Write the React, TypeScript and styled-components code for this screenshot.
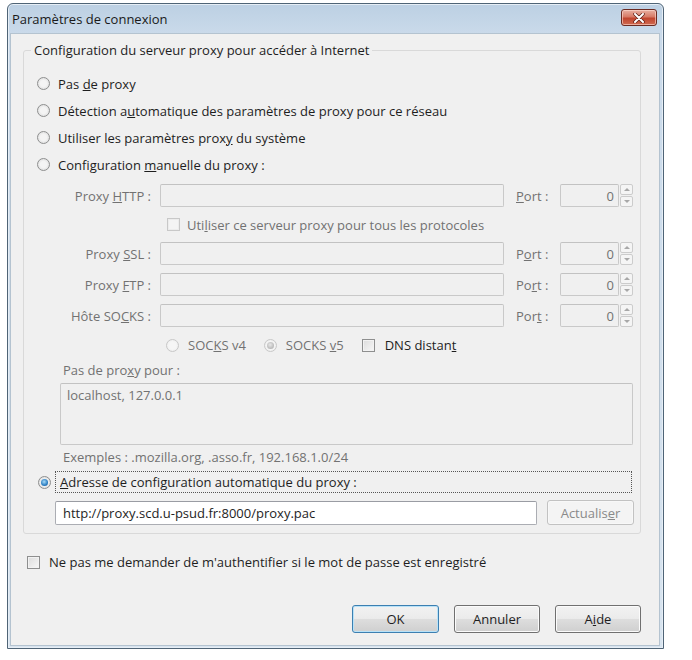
import React from 'react';
import styled, { createGlobalStyle, css } from 'styled-components';

const GlobalStyle = createGlobalStyle`
  html, body {
    margin: 0;
    padding: 0;
    background: #ffffff;
  }
  body {
    font-family: 'Open Sans', 'Noto Sans', sans-serif;
    font-size: 13px;
    color: #1e1e1e;
  }
`;

const Stage = styled.div`
  width: 692px;
  height: 660px;
  padding: 3px 0 0 7px;
  box-sizing: border-box;
`;

const Window = styled.div`
  width: 657px;
  height: 646px;
  box-sizing: border-box;
  display: flex;
  flex-direction: column;
  border: 1px solid #4f6476;
  border-radius: 6px 6px 0 0;
  background: linear-gradient(180deg, #bcd0e3 0px, #cadaea 30px, #d8e4ef 100%);
  box-shadow: inset 0 0 0 1px #e6eef6;
`;

const TitleBar = styled.div`
  height: 29px;
  flex: none;
  display: flex;
  align-items: flex-start;
  justify-content: space-between;
  padding: 0 6px 0 4px;
`;

const Title = styled.span`
  margin-top: 6px;
  font-size: 13px;
  color: #1a1a1a;
`;

const CloseButton = styled.div`
  margin-top: 5px;
  width: 36px;
  height: 17px;
  box-sizing: border-box;
  border: 1px solid #6b2b22;
  border-radius: 3px;
  background: linear-gradient(180deg, #e8b0a2 0%, #d77a66 45%, #c0452f 55%, #d06a50 100%);
  box-shadow: inset 0 0 0 1px rgba(255, 220, 210, 0.6);
  display: flex;
  align-items: center;
  justify-content: center;
`;

const Body = styled.div`
  flex: 1;
  margin: 0 3px 2px 2px;
  background: #f0f0f0;
  border: 1px solid #b4c3d0;
  padding: 7px 18px 0 12px;
  display: flex;
  flex-direction: column;
`;

const GroupBox = styled.fieldset`
  margin: 0;
  padding: 11px 0 8px 0;
  border: 1px solid #d9d9d9;
  border-radius: 3px;
  min-width: 0;
`;

const Legend = styled.legend`
  margin-left: 7px;
  padding: 0 3px;
  line-height: 18px;
  color: #1e1e1e;
`;

const OptionRow = styled.div`
  display: flex;
  align-items: center;
  gap: 8px;
  height: 27px;
  padding-left: 13px;
`;

const Text = styled.span<{ $disabled?: boolean }>`
  color: ${({ $disabled }) => ($disabled ? '#727272' : '#1e1e1e')};
  white-space: nowrap;
  line-height: 18px;
`;

const Radio = styled.span<{ $checked?: boolean; $disabled?: boolean }>`
  flex: none;
  position: relative;
  width: 13px;
  height: 13px;
  box-sizing: border-box;
  border-radius: 50%;
  border: 1px solid ${({ $disabled }) => ($disabled ? '#c8c8c8' : '#8e8f8f')};
  background: ${({ $disabled }) =>
    $disabled
      ? 'radial-gradient(circle, #f6f6f6 0 45%, #e8e8e8 100%)'
      : 'radial-gradient(circle, #f4f4f4 0 40%, #d4d4d4 100%)'};
  ${({ $checked, $disabled }) =>
    $checked &&
    css`
      &::after {
        content: '';
        position: absolute;
        inset: 2px;
        border-radius: 50%;
        background: ${$disabled
          ? 'radial-gradient(circle at 45% 40%, #e8e8e8, #b5b5b5 75%)'
          : 'radial-gradient(circle at 45% 40%, #a8dcf8, #2a7dc2 60%, #124f8c)'};
      }
    `}
`;

const Checkbox = styled.span<{ $disabled?: boolean }>`
  flex: none;
  width: 13px;
  height: 13px;
  box-sizing: border-box;
  border: 1px solid ${({ $disabled }) => ($disabled ? '#c8c8c8' : '#8e8f8f')};
  background: ${({ $disabled }) =>
    $disabled ? '#f4f4f4' : 'linear-gradient(135deg, #dcdcdc, #f7f7f7)'};
  box-shadow: inset 0 0 0 1px ${({ $disabled }) => ($disabled ? '#ececec' : '#f2f2f2')};
`;

const Manual = styled.div`
  margin: 6px 7px 0 36px;
  display: flex;
  flex-direction: column;
`;

const ProxyGrid = styled.div`
  display: grid;
  grid-template-columns: 100px 344px 56px 1fr;
  grid-template-rows: 23px 19px 23px 23px 23px;
  row-gap: 8px;
  align-items: center;
`;

const FieldLabel = styled(Text)`
  text-align: right;
  padding-right: 9px;
`;

const PortLabel = styled(Text)`
  padding-left: 12px;
`;

const Field = styled.div<{ $disabled?: boolean; $height?: number }>`
  height: ${({ $height }) => $height ?? 23}px;
  box-sizing: border-box;
  border: 1px solid ${({ $disabled }) => ($disabled ? '#c9c9c9' : '#abadb3')};
  border-top-color: ${({ $disabled }) => ($disabled ? '#c2c2c2' : '#9a9ca3')};
  border-radius: 2px;
  background: ${({ $disabled }) => ($disabled ? '#f0f0f0' : '#ffffff')};
  padding: 0 7px;
  display: flex;
  align-items: center;
  color: ${({ $disabled }) => ($disabled ? '#727272' : '#1e1e1e')};
  white-space: nowrap;
`;

const AreaField = styled(Field)`
  margin-top: 4px;
  align-items: flex-start;
  padding: 2px 6px;
`;

const UrlField = styled(Field)`
  flex: 1;
`;

const PortBox = styled.div`
  display: flex;
  height: 23px;
  gap: 1px;
`;

const PortField = styled(Field)`
  width: 59px;
  justify-content: flex-end;
  padding: 0 4px;
`;

const Spinner = styled.div`
  width: 13px;
  display: flex;
  flex-direction: column;
  gap: 1px;
`;

const SpinHalf = styled.span<{ $up?: boolean }>`
  flex: 1;
  box-sizing: border-box;
  border: 1px solid #cccccc;
  border-radius: 2px;
  background: #f5f5f5;
  display: flex;
  align-items: center;
  justify-content: center;
  &::after {
    content: '';
    border-left: 3px solid transparent;
    border-right: 3px solid transparent;
    ${({ $up }) =>
      $up ? 'border-bottom: 3px solid #a8a8a8;' : 'border-top: 3px solid #a8a8a8;'}
  }
`;

const ShareRow = styled.div`
  grid-column: 2 / 5;
  display: flex;
  align-items: center;
  gap: 7px;
  padding-left: 7px;
`;

const SocksRow = styled.div`
  margin-top: 8px;
  height: 20px;
  display: flex;
  align-items: center;
  gap: 18px;
  padding-left: 106px;
`;

const SocksItem = styled.span<{ $gap: number }>`
  display: flex;
  align-items: center;
  gap: ${({ $gap }) => $gap}px;
`;

const NoProxyLabel = styled(Text)`
  margin-top: 6px;
  padding-left: 3px;
`;

const Hint = styled(Text)`
  margin-top: 3px;
  padding-left: 3px;
`;

const AutoRow = styled.div`
  display: flex;
  align-items: center;
  gap: 4px;
  margin-top: 5px;
  padding-left: 14px;
  padding-right: 8px;
  height: 22px;
`;

const FocusRing = styled.span`
  flex: 1;
  height: 22px;
  box-sizing: border-box;
  border: 1px dotted #555555;
  padding-left: 4px;
  display: flex;
  align-items: center;
`;

const UrlRow = styled.div`
  margin: 7px 6px 0 31px;
  display: flex;
  align-items: center;
  gap: 10px;
`;

const Button = styled.div<{ $default?: boolean; $disabled?: boolean; $width?: number; $height?: number }>`
  width: ${({ $width }) => $width ?? 86}px;
  height: ${({ $height }) => $height ?? 28}px;
  box-sizing: border-box;
  border-radius: 3px;
  display: flex;
  align-items: center;
  justify-content: center;
  border: 1px solid ${({ $default, $disabled }) => ($disabled ? '#c2c2c2' : $default ? '#3c7fb1' : '#707070')};
  background: ${({ $disabled }) =>
    $disabled
      ? '#f4f4f4'
      : 'linear-gradient(180deg, #f2f2f2 0%, #ebebeb 48%, #dddddd 52%, #cfcfcf 100%)'};
  box-shadow: inset 0 0 0 1px ${({ $default, $disabled }) =>
    $disabled ? '#f8f8f8' : $default ? '#b8e2f8' : '#fbfbfb'};
  color: ${({ $disabled }) => ($disabled ? '#8a8a8a' : '#1e1e1e')};
`;

const AuthRow = styled.div`
  margin-top: 19px;
  display: flex;
  align-items: center;
  gap: 9px;
  padding-left: 4px;
  height: 18px;
`;

const Footer = styled.div`
  margin-top: 34px;
  display: flex;
  justify-content: flex-end;
  gap: 15px;
`;

const PortCell: React.FC = () => (
  <PortBox>
    <PortField $disabled>0</PortField>
    <Spinner>
      <SpinHalf $up />
      <SpinHalf />
    </Spinner>
  </PortBox>
);

const proxies = [
  { label: 'Proxy ', key: 'H', rest: 'TTP :', port: ['', 'P', 'ort :'] },
  { label: 'Proxy ', key: 'S', rest: 'SL :', port: ['P', 'o', 'rt :'] },
  { label: 'Proxy ', key: 'F', rest: 'TP :', port: ['Po', 'r', 't :'] },
  { label: 'Hôte SO', key: 'C', rest: 'KS :', port: ['Por', 't', ' :'] },
];

const App: React.FC = () => (
  <Stage>
    <GlobalStyle />
    <Window>
      <TitleBar>
        <Title>Paramètres de connexion</Title>
        <CloseButton>
          <svg width="12" height="10" viewBox="0 0 12 10">
            <path d="M2 1 L10 9 M10 1 L2 9" stroke="#5a1e16" strokeWidth="3.4" strokeLinecap="round" />
            <path d="M2 1 L10 9 M10 1 L2 9" stroke="#ffffff" strokeWidth="2" strokeLinecap="round" />
          </svg>
        </CloseButton>
      </TitleBar>
      <Body>
        <GroupBox>
          <Legend>Configuration du serveur proxy pour accéder à Internet</Legend>
          <OptionRow>
            <Radio />
            <Text>Pas <u>d</u>e proxy</Text>
          </OptionRow>
          <OptionRow>
            <Radio />
            <Text>Détection a<u>u</u>tomatique des paramètres de proxy pour ce réseau</Text>
          </OptionRow>
          <OptionRow>
            <Radio />
            <Text>Utiliser les paramètres prox<u>y</u> du système</Text>
          </OptionRow>
          <OptionRow>
            <Radio />
            <Text>Configuration <u>m</u>anuelle du proxy :</Text>
          </OptionRow>
          <Manual>
            <ProxyGrid>
              {proxies.map((p, i) => (
                <React.Fragment key={p.key}>
                  <FieldLabel $disabled>
                    {p.label}
                    <u>{p.key}</u>
                    {p.rest}
                  </FieldLabel>
                  <Field $disabled />
                  <PortLabel $disabled>
                    {p.port[0]}
                    <u>{p.port[1]}</u>
                    {p.port[2]}
                  </PortLabel>
                  <PortCell />
                  {i === 0 && (
                    <ShareRow>
                      <Checkbox $disabled />
                      <Text $disabled>Uti<u>l</u>iser ce serveur proxy pour tous les protocoles</Text>
                    </ShareRow>
                  )}
                </React.Fragment>
              ))}
            </ProxyGrid>
            <SocksRow>
              <SocksItem $gap={9}>
                <Radio $disabled />
                <Text $disabled>SOC<u>K</u>S v4</Text>
              </SocksItem>
              <SocksItem $gap={9}>
                <Radio $disabled $checked />
                <Text $disabled>SOCKS <u>v</u>5</Text>
              </SocksItem>
              <SocksItem $gap={10}>
                <Checkbox />
                <Text>DNS distan<u>t</u></Text>
              </SocksItem>
            </SocksRow>
            <NoProxyLabel $disabled>Pas de pro<u>x</u>y pour :</NoProxyLabel>
            <AreaField $disabled $height={62}>localhost, 127.0.0.1</AreaField>
            <Hint $disabled>Exemples : .mozilla.org, .asso.fr, 192.168.1.0/24</Hint>
          </Manual>
          <AutoRow>
            <Radio $checked />
            <FocusRing>
              <Text><u>A</u>dresse de configuration automatique du proxy :</Text>
            </FocusRing>
          </AutoRow>
          <UrlRow>
            <UrlField $height={24}>http://proxy.scd.u-psud.fr:8000/proxy.pac</UrlField>
            <Button $disabled $width={87} $height={25}>Actualis<u>e</u>r</Button>
          </UrlRow>
        </GroupBox>
        <AuthRow>
          <Checkbox />
          <Text>Ne pas me demander de m'authentifier si le mot de passe est enregistré</Text>
        </AuthRow>
        <Footer>
          <Button $default $width={87}>OK</Button>
          <Button>Annuler</Button>
          <Button>A<u>i</u>de</Button>
        </Footer>
      </Body>
    </Window>
  </Stage>
);

export default App;
